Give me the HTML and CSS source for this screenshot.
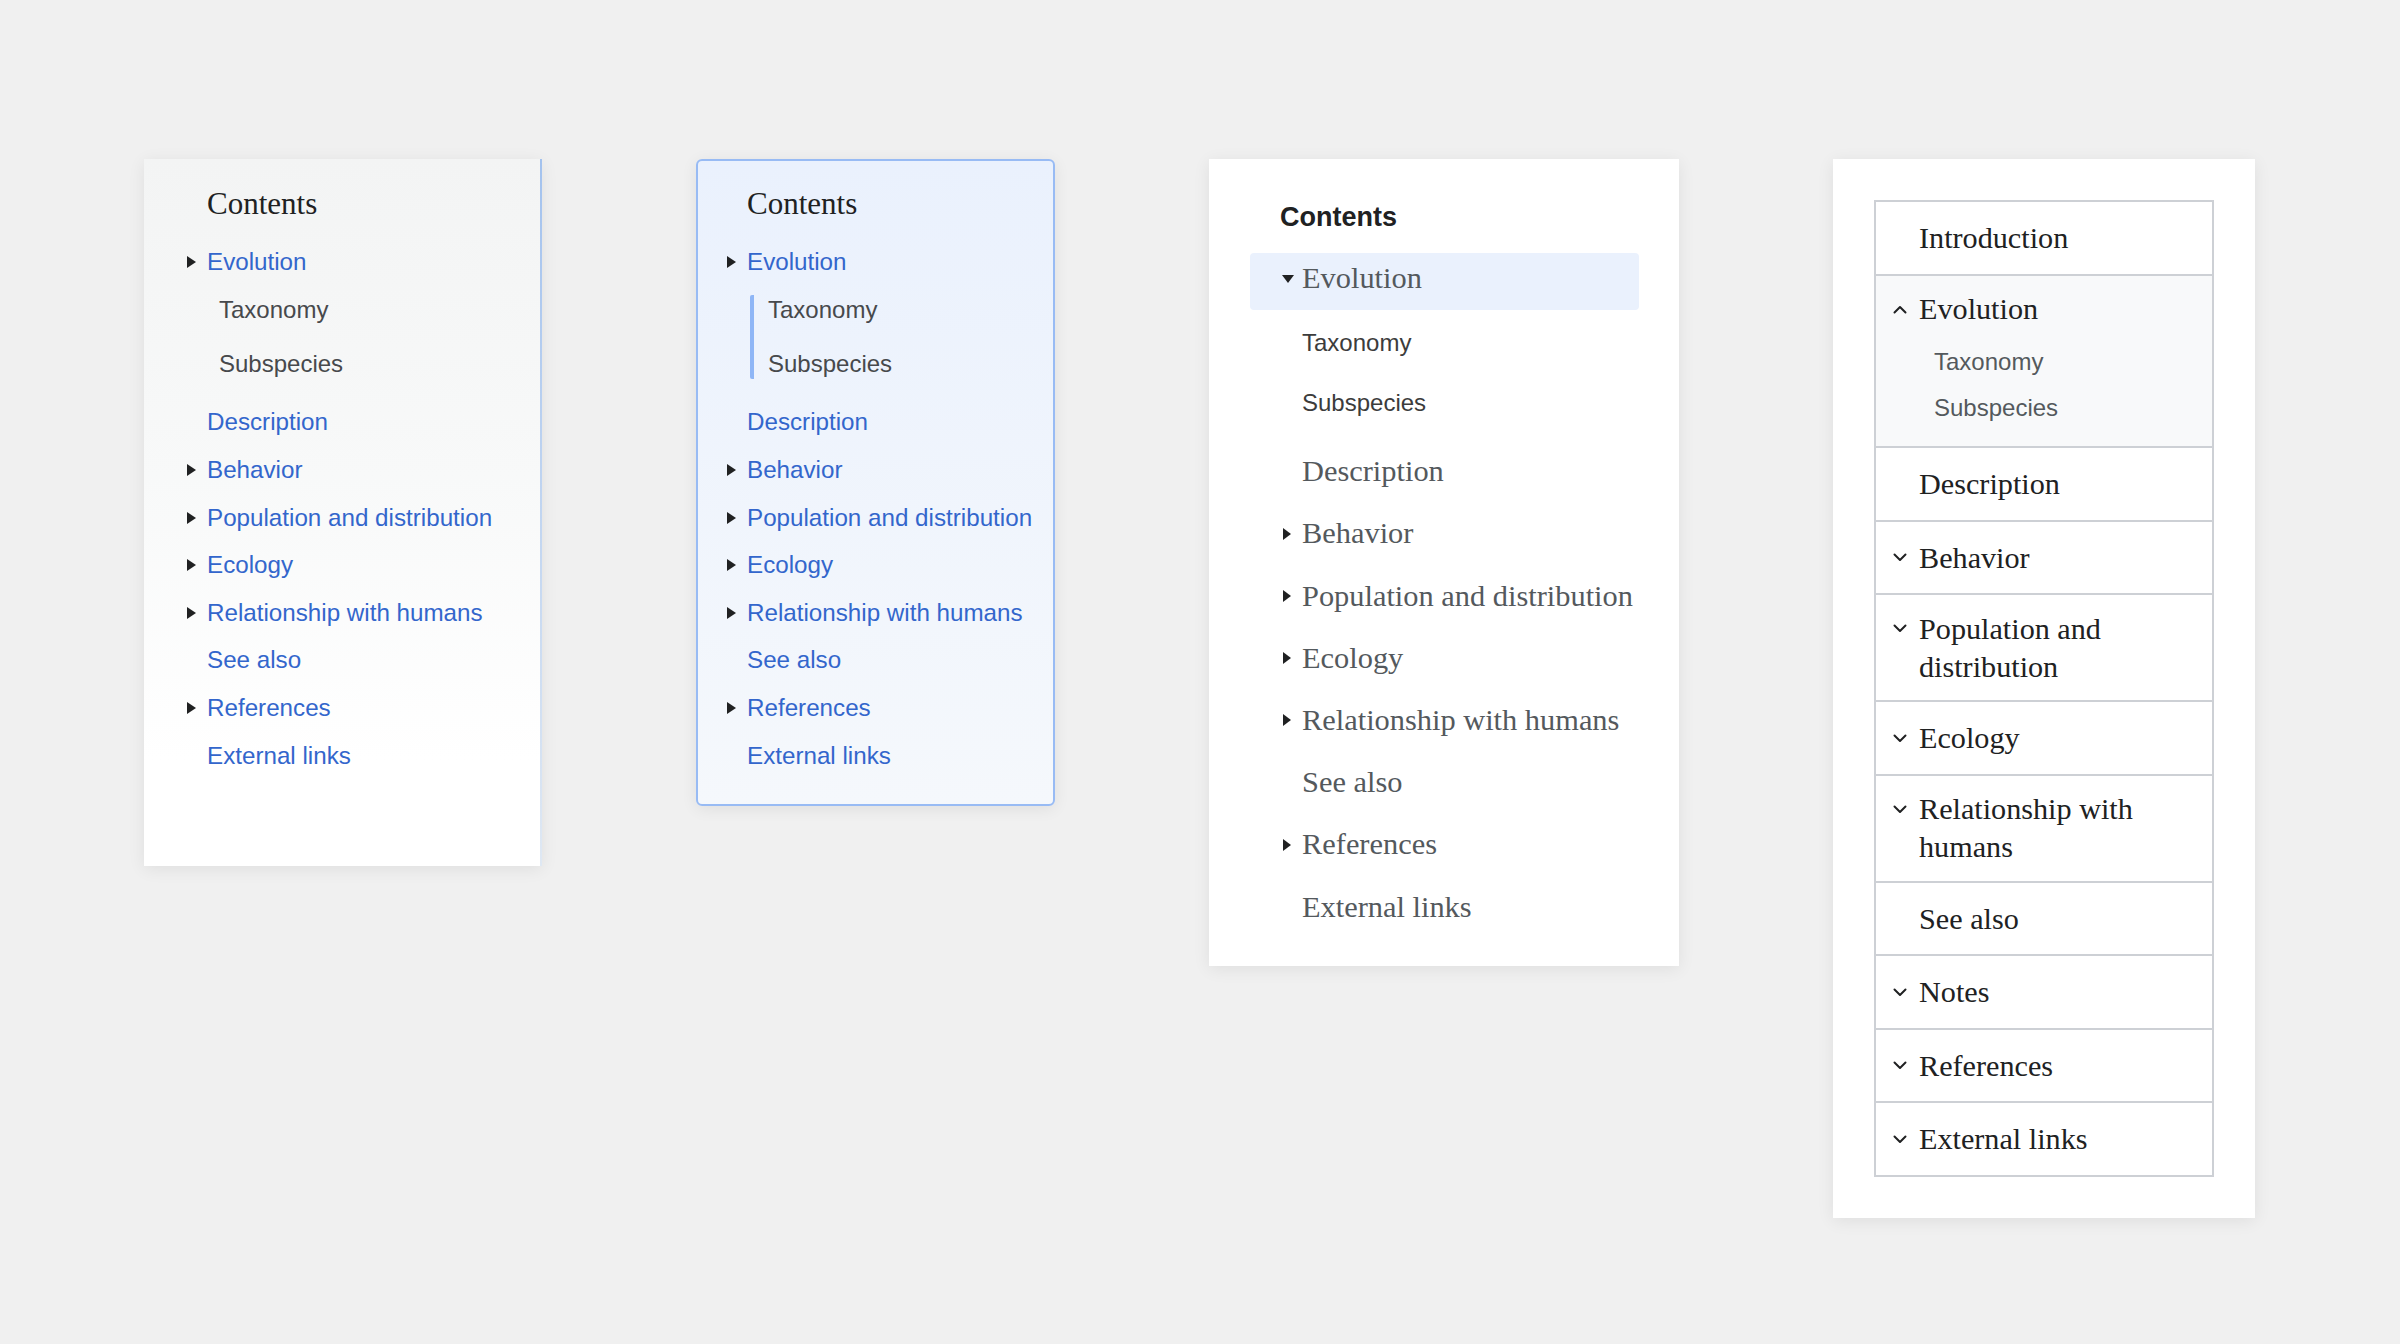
FILE: index.html
```html
<!DOCTYPE html>
<html lang="en">
<head>
<meta charset="utf-8">
<title>Contents variants</title>
<link rel="stylesheet" href="styles.css">
</head>
<body>
<div class="stage">

  <!-- Variant A -->
  <nav class="toc toc-a">
    <div class="title">Contents</div>
    <ul class="list">
      <li class="item">
        <div class="row"><span class="twisty"><i class="tri-r"></i></span><a>Evolution</a></div>
        <ul class="sub"><li>Taxonomy</li><li>Subspecies</li></ul>
      </li>
      <li class="item"><div class="row"><span class="twisty"></span><a>Description</a></div></li>
      <li class="item"><div class="row"><span class="twisty"><i class="tri-r"></i></span><a>Behavior</a></div></li>
      <li class="item"><div class="row"><span class="twisty"><i class="tri-r"></i></span><a>Population and distribution</a></div></li>
      <li class="item"><div class="row"><span class="twisty"><i class="tri-r"></i></span><a>Ecology</a></div></li>
      <li class="item"><div class="row"><span class="twisty"><i class="tri-r"></i></span><a>Relationship with humans</a></div></li>
      <li class="item"><div class="row"><span class="twisty"></span><a>See also</a></div></li>
      <li class="item"><div class="row"><span class="twisty"><i class="tri-r"></i></span><a>References</a></div></li>
      <li class="item"><div class="row"><span class="twisty"></span><a>External links</a></div></li>
    </ul>
  </nav>

  <!-- Variant B -->
  <nav class="toc toc-b">
    <div class="title">Contents</div>
    <ul class="list">
      <li class="item">
        <div class="row"><span class="twisty"><i class="tri-r"></i></span><a>Evolution</a></div>
        <ul class="sub"><li>Taxonomy</li><li>Subspecies</li></ul>
      </li>
      <li class="item"><div class="row"><span class="twisty"></span><a>Description</a></div></li>
      <li class="item"><div class="row"><span class="twisty"><i class="tri-r"></i></span><a>Behavior</a></div></li>
      <li class="item"><div class="row"><span class="twisty"><i class="tri-r"></i></span><a>Population and distribution</a></div></li>
      <li class="item"><div class="row"><span class="twisty"><i class="tri-r"></i></span><a>Ecology</a></div></li>
      <li class="item"><div class="row"><span class="twisty"><i class="tri-r"></i></span><a>Relationship with humans</a></div></li>
      <li class="item"><div class="row"><span class="twisty"></span><a>See also</a></div></li>
      <li class="item"><div class="row"><span class="twisty"><i class="tri-r"></i></span><a>References</a></div></li>
      <li class="item"><div class="row"><span class="twisty"></span><a>External links</a></div></li>
    </ul>
  </nav>

  <!-- Variant C -->
  <nav class="toc toc-c">
    <div class="title">Contents</div>
    <ul class="list">
      <li class="item">
        <div class="row active"><span class="twisty"><i class="tri-d"></i></span><a>Evolution</a></div>
        <ul class="sub"><li>Taxonomy</li><li>Subspecies</li></ul>
      </li>
      <li class="item"><div class="row"><span class="twisty"></span><a>Description</a></div></li>
      <li class="item"><div class="row"><span class="twisty"><i class="tri-r"></i></span><a>Behavior</a></div></li>
      <li class="item"><div class="row"><span class="twisty"><i class="tri-r"></i></span><a>Population and distribution</a></div></li>
      <li class="item"><div class="row"><span class="twisty"><i class="tri-r"></i></span><a>Ecology</a></div></li>
      <li class="item"><div class="row"><span class="twisty"><i class="tri-r"></i></span><a>Relationship with humans</a></div></li>
      <li class="item"><div class="row"><span class="twisty"></span><a>See also</a></div></li>
      <li class="item"><div class="row"><span class="twisty"><i class="tri-r"></i></span><a>References</a></div></li>
      <li class="item"><div class="row"><span class="twisty"></span><a>External links</a></div></li>
    </ul>
  </nav>

  <!-- Variant D -->
  <nav class="toc toc-d">
    <ul class="box">
      <li class="r"><div class="r-in"><span class="chev"></span><div class="label">Introduction</div></div></li>
      <li class="r open"><div class="r-in"><span class="chev"><svg width="14" height="9" viewBox="0 0 14 9"><polyline points="1.5,7.5 7,2 12.5,7.5"/></svg></span><div class="label">Evolution<ul class="sub"><li>Taxonomy</li><li>Subspecies</li></ul></div></div></li>
      <li class="r"><div class="r-in"><span class="chev"></span><div class="label">Description</div></div></li>
      <li class="r"><div class="r-in"><span class="chev"><svg width="14" height="9" viewBox="0 0 14 9"><polyline points="1.5,1.5 7,7 12.5,1.5"/></svg></span><div class="label">Behavior</div></div></li>
      <li class="r"><div class="r-in"><span class="chev"><svg width="14" height="9" viewBox="0 0 14 9"><polyline points="1.5,1.5 7,7 12.5,1.5"/></svg></span><div class="label">Population and distribution</div></div></li>
      <li class="r"><div class="r-in"><span class="chev"><svg width="14" height="9" viewBox="0 0 14 9"><polyline points="1.5,1.5 7,7 12.5,1.5"/></svg></span><div class="label">Ecology</div></div></li>
      <li class="r"><div class="r-in"><span class="chev"><svg width="14" height="9" viewBox="0 0 14 9"><polyline points="1.5,1.5 7,7 12.5,1.5"/></svg></span><div class="label">Relationship with humans</div></div></li>
      <li class="r"><div class="r-in"><span class="chev"></span><div class="label">See also</div></div></li>
      <li class="r"><div class="r-in"><span class="chev"><svg width="14" height="9" viewBox="0 0 14 9"><polyline points="1.5,1.5 7,7 12.5,1.5"/></svg></span><div class="label">Notes</div></div></li>
      <li class="r"><div class="r-in"><span class="chev"><svg width="14" height="9" viewBox="0 0 14 9"><polyline points="1.5,1.5 7,7 12.5,1.5"/></svg></span><div class="label">References</div></div></li>
      <li class="r"><div class="r-in"><span class="chev"><svg width="14" height="9" viewBox="0 0 14 9"><polyline points="1.5,1.5 7,7 12.5,1.5"/></svg></span><div class="label">External links</div></div></li>
    </ul>
  </nav>

</div>
</body>
</html>
```

FILE: styles.css
```css
html, body {
  margin: 0;
  padding: 0;
}

body {
  background: #f0f0f0;
  font-family: "Liberation Sans", Arial, sans-serif;
  width: 2400px;
  height: 1344px;
  overflow: hidden;
}

ul {
  list-style: none;
  margin: 0;
  padding: 0;
}

a {
  text-decoration: none;
  color: inherit;
}

.stage {
  display: flex;
  align-items: flex-start;
  gap: 154px;
  padding: 159px 0 0 144px;
}

.toc {
  box-sizing: border-box;
  flex: none;
  box-shadow: 0 3px 16px rgba(0, 0, 0, 0.075);
}

/* ---------- shared twisty triangles ---------- */
.twisty {
  flex: none;
  width: 20px;
  display: flex;
  align-items: center;
}

.tri-r {
  display: block;
  width: 0;
  height: 0;
  border-left: 9px solid #202122;
  border-top: 6.5px solid transparent;
  border-bottom: 6.5px solid transparent;
}

.tri-d {
  display: block;
  width: 0;
  height: 0;
  border-top: 8px solid #202122;
  border-left: 6px solid transparent;
  border-right: 6px solid transparent;
}

/* ---------- Variant A & B ---------- */
.toc-a {
  width: 398px;
  padding: 21px 0 87px 43px;
  background: linear-gradient(#f3f4f4 0%, #f8f9f9 45%, #ffffff 85%);
  border-right: 2px solid #a9c7ee;
  border-image: linear-gradient(#a3c2ee, #dfe8f3) 1;
}

.toc-b {
  width: 359px;
  padding: 19px 0 25px 29px;
  background: linear-gradient(#eaf1fd, #f5f8fc);
  border: 2px solid #98bbf4;
  border-radius: 6px;
}

.toc-a .title,
.toc-b .title {
  font-family: "Liberation Serif", "Times New Roman", serif;
  font-size: 31px;
  line-height: 48px;
  color: #202122;
  margin: 0 0 10px 20px;
}

.toc-a .row,
.toc-b .row {
  display: flex;
  align-items: center;
  height: 47.6px;
  font-size: 24.2px;
  color: #3366cc;
  white-space: nowrap;
}

.toc-a .sub,
.toc-b .sub {
  display: flex;
  flex-direction: column;
  gap: 24px;
  margin: 9.5px 0 19.5px 32px;
  font-size: 24px;
  line-height: 30px;
  color: #47494c;
}

.toc-b .sub {
  margin-left: 23px;
  padding-left: 14px;
  border-left: 4px solid #8fb6f6;
  border-radius: 2px;
}

/* ---------- Variant C ---------- */
.toc-c {
  width: 470px;
  padding: 38px 40px 27px 41px;
  background: #ffffff;
}

.toc-c .title {
  font-size: 27px;
  font-weight: bold;
  line-height: 40px;
  color: #202122;
  margin: 0 0 16px 30px;
}

.toc-c .item {
  margin-bottom: 5.2px;
}

.toc-c .item:last-child {
  margin-bottom: 0;
}

.toc-c .row {
  display: flex;
  align-items: center;
  box-sizing: border-box;
  height: 57px;
  padding: 0 0 6px 32px;
  border-radius: 4px;
  font-family: "Liberation Serif", "Times New Roman", serif;
  font-size: 30.4px;
  color: #54595d;
  white-space: nowrap;
}

.toc-c .row.active {
  background: #eaf1fd;
}

.toc-c .tri-r {
  border-left-width: 8px;
  border-top-width: 6px;
  border-bottom-width: 6px;
  margin-left: 1px;
}

.toc-c .sub {
  margin: 2.5px 0 12.5px 52px;
  font-size: 24px;
  line-height: 60.6px;
  color: #3c3c3c;
}

/* ---------- Variant D ---------- */
.toc-d {
  width: 422px;
  padding: 41px;
  background: #ffffff;
}

.toc-d .box {
  border: 2px solid #cdd0d5;
  border-bottom: none;
}

.toc-d .r {
  display: flex;
  align-items: center;
  box-sizing: border-box;
  min-height: 73.5px;
  padding: 14.5px 16px 14.5px 17px;
  border-bottom: 2px solid #cdd0d5;
}

.toc-d .r.open {
  background: #f8f9fa;
}

.toc-d .r-in {
  display: flex;
  align-items: flex-start;
}

.toc-d .chev {
  flex: none;
  width: 26px;
  height: 38px;
  display: flex;
  align-items: center;
}

.toc-d .chev svg {
  display: block;
}

.toc-d .chev polyline {
  fill: none;
  stroke: #202122;
  stroke-width: 2;
  stroke-linecap: round;
  stroke-linejoin: round;
}

.toc-d .label {
  font-family: "Liberation Serif", "Times New Roman", serif;
  font-size: 30.2px;
  line-height: 38px;
  color: #202122;
}

.toc-d .sub {
  margin-top: 10.75px;
  padding-left: 15px;
  font-family: "Liberation Sans", Arial, sans-serif;
  font-size: 24px;
  line-height: 46.5px;
  color: #54595d;
}
```
